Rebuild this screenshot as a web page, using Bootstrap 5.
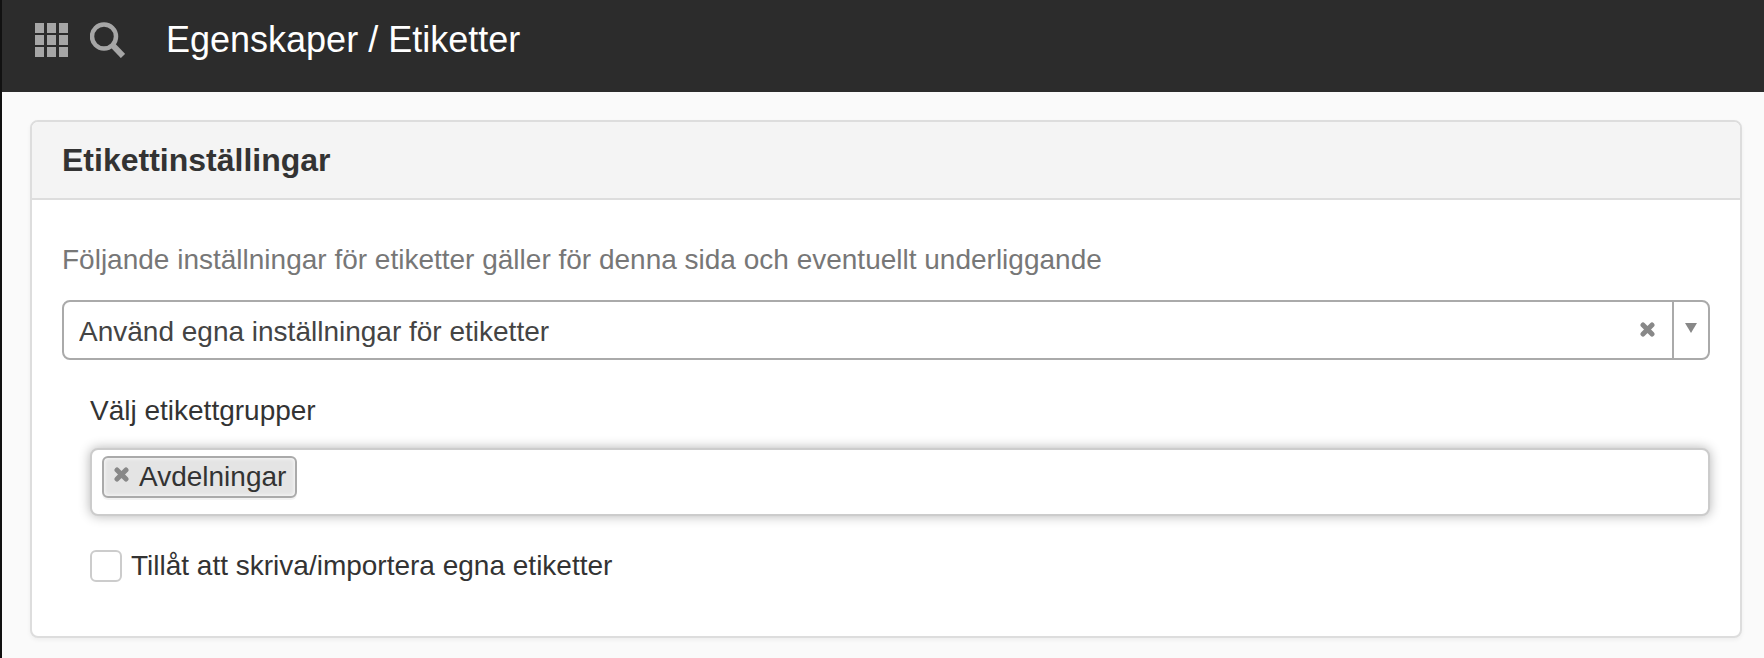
<!DOCTYPE html>
<html lang="sv">
<head>
<meta charset="utf-8">
<meta name="viewport" content="width=device-width, initial-scale=1">
<title>Egenskaper / Etiketter</title>
<link href="https://cdn.jsdelivr.net/npm/bootstrap@5.3.0/dist/css/bootstrap.min.css" rel="stylesheet">
<style>
  body { font-family: "Liberation Sans", Arial, sans-serif; font-size: 28px; line-height: 40px; color: #333; background: #fafafa; }
  .page-shell { border-left: 2px solid #111; }
  .topbar { height: 92px; padding: 0 33px 12px; background: #2c2c2c; }
  .topbar-tools { gap: 22px; margin-right: 41px; }
  .topbar h1 { font-size: 36px; line-height: 44px; color: #fff; }
  .icon-btn { color: #a6a6a6; line-height: 0; }
  .page-main { padding: 28px 22px 20px 28px; }
  .panel { border: 2px solid #ddd; border-radius: 8px; box-shadow: 0 2px 4px rgba(0,0,0,.05); }
  .panel-head { background: #f4f4f4; border-bottom: 2px solid #ddd; padding: 18px 30px; border-radius: 6px 6px 0 0; }
  .panel-head h2 { font-size: 32px; line-height: 40px; font-weight: 700; }
  .panel-content { padding: 40px 30px 50px; }
  .intro { color: #777; margin-bottom: 20px; }
  .combo { height: 60px; border: 2px solid #aaa; border-radius: 8px; background: #fff; }
  .combo select { appearance: none; border: 0; background: none; color: #444; padding: 4px 15px 0; min-width: 0; }
  .glyph-btn { border: 0; background: none; color: #888; padding: 0; line-height: 0; }
  .combo .glyph-btn { width: 50px; padding-bottom: 2px; }
  .combo .arrow { width: 36px; border-left: 2px solid #aaa; padding-bottom: 4px; }
  .nested { padding: 31px 0 0 28px; }
  .tagbox { height: 68px; border: 2px solid #ccc; border-radius: 8px; background: #fff; padding: 6px 10px; margin: 17px 0 30px; box-shadow: 0 0 12px rgba(0,0,0,.3); }
  .tag { height: 42px; border: 2px solid #aaa; border-radius: 6px; background: #e4e4e4; padding: 0 9px 0 10px; gap: 10px; box-shadow: inset 0 0 4px #fff, 0 2px 0 rgba(0,0,0,.05); line-height: 38px; }
  .tag .glyph-btn { padding-bottom: 5px; }
  .tagbox input { border: 0; outline: 0; background: none; height: 42px; min-width: 0; }
  .allow-row { gap: 9px; }
  .allow-row .form-check-input { width: 32px; height: 32px; border: 2px solid #ccc; border-radius: 6px; margin: 0; }
</style>
</head>
<body>
<div class="page-shell min-vh-100">
  <header class="topbar d-flex align-items-center">
    <div class="topbar-tools d-flex">
      <button type="button" class="icon-btn btn p-0 border-0" aria-label="Moduler">
        <svg width="33" height="34" viewBox="0 0 33 34" fill="currentColor"><path d="M0 0h9v10H0zM12 0h9v10h-9zM24 0h9v10h-9zM0 12h9v10H0zM12 12h9v10h-9zM24 12h9v10h-9zM0 24h9v10H0zM12 24h9v10h-9zM24 24h9v10h-9z"/></svg>
      </button>
      <button type="button" class="icon-btn btn p-0 border-0" aria-label="Sök">
        <svg width="35" height="36" viewBox="0 0 35 36" fill="none" stroke="currentColor"><circle cx="14" cy="14.500" r="12" stroke-width="4.500"/><path d="M21.500 22 33 34" stroke-width="6"/></svg>
      </button>
    </div>
    <h1 class="mb-0 fw-normal">Egenskaper / Etiketter</h1>
  </header>
  <main class="page-main">
    <section class="panel bg-white">
      <div class="panel-head"><h2 class="mb-0">Etikettinställingar</h2></div>
      <form class="panel-content">
        <label class="intro d-block" for="mode">Följande inställningar för etiketter gäller för denna sida och eventuellt underliggande</label>
        <div class="combo d-flex">
          <select id="mode" class="flex-grow-1"><option>Använd egna inställningar för etiketter</option></select>
          <button type="button" class="glyph-btn" aria-label="Rensa"><svg width="15" height="15" viewBox="0 0 15 15" stroke="currentColor" stroke-width="5" stroke-linecap="round"><path d="M3 3l9 9M12 3l-9 9"/></svg></button>
          <button type="button" class="glyph-btn arrow" aria-label="Visa alternativ"><svg width="12" height="10" viewBox="0 0 12 10" fill="currentColor"><path d="M0 0h12L6 10z"/></svg></button>
        </div>
        <div class="nested">
          <label class="d-block" for="groups">Välj etikettgrupper</label>
          <div class="tagbox d-flex">
            <span class="tag d-flex align-items-center"><button type="button" class="glyph-btn" aria-label="Ta bort Avdelningar"><svg width="15" height="15" viewBox="0 0 15 15" stroke="currentColor" stroke-width="5" stroke-linecap="round"><path d="M3 3l9 9M12 3l-9 9"/></svg></button>Avdelningar</span>
            <input id="groups" type="text" class="flex-grow-1" autocomplete="off">
          </div>
          <div class="allow-row d-flex align-items-center">
            <input class="form-check-input" type="checkbox" id="allow">
            <label for="allow">Tillåt att skriva/importera egna etiketter</label>
          </div>
        </div>
      </form>
    </section>
  </main>
</div>
<script src="https://cdn.jsdelivr.net/npm/bootstrap@5.3.0/dist/js/bootstrap.bundle.min.js"></script>
</body>
</html>
